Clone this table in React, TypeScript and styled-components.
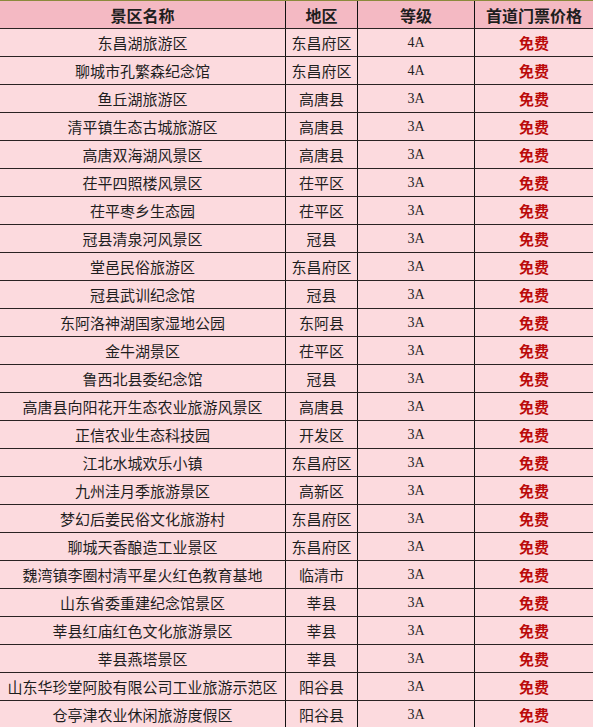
import styled, { createGlobalStyle } from "styled-components";

const GlobalStyle = createGlobalStyle`
  html, body {
    margin: 0;
    padding: 0;
    background: #fcdade;
  }
  body {
    font-family: "Noto Sans CJK SC", "Noto Sans", sans-serif;
    color: #1e1e1e;
  }
`;

interface Spot {
  name: string
  area: string
  level: string
}

const spots: Spot[] = [
  { name: "东昌湖旅游区", area: "东昌府区", level: "4A" },
  { name: "聊城市孔繁森纪念馆", area: "东昌府区", level: "4A" },
  { name: "鱼丘湖旅游区", area: "高唐县", level: "3A" },
  { name: "清平镇生态古城旅游区", area: "高唐县", level: "3A" },
  { name: "高唐双海湖风景区", area: "高唐县", level: "3A" },
  { name: "茌平四照楼风景区", area: "茌平区", level: "3A" },
  { name: "茌平枣乡生态园", area: "茌平区", level: "3A" },
  { name: "冠县清泉河风景区", area: "冠县", level: "3A" },
  { name: "堂邑民俗旅游区", area: "东昌府区", level: "3A" },
  { name: "冠县武训纪念馆", area: "冠县", level: "3A" },
  { name: "东阿洛神湖国家湿地公园", area: "东阿县", level: "3A" },
  { name: "金牛湖景区", area: "茌平区", level: "3A" },
  { name: "鲁西北县委纪念馆", area: "冠县", level: "3A" },
  { name: "高唐县向阳花开生态农业旅游风景区", area: "高唐县", level: "3A" },
  { name: "正信农业生态科技园", area: "开发区", level: "3A" },
  { name: "江北水城欢乐小镇", area: "东昌府区", level: "3A" },
  { name: "九州洼月季旅游景区", area: "高新区", level: "3A" },
  { name: "梦幻后姜民俗文化旅游村", area: "东昌府区", level: "3A" },
  { name: "聊城天香酿造工业景区", area: "东昌府区", level: "3A" },
  { name: "魏湾镇李圈村清平星火红色教育基地", area: "临清市", level: "3A" },
  { name: "山东省委重建纪念馆景区", area: "莘县", level: "3A" },
  { name: "莘县红庙红色文化旅游景区", area: "莘县", level: "3A" },
  { name: "莘县燕塔景区", area: "莘县", level: "3A" },
  { name: "山东华珍堂阿胶有限公司工业旅游示范区", area: "阳谷县", level: "3A" },
  { name: "仓亭津农业休闲旅游度假区", area: "阳谷县", level: "3A" },
];

const Table = styled.div`
  width: 593px;
  display: flex;
  flex-direction: column;
`;

const Row = styled.div<{ $head?: boolean }>`
  display: grid;
  grid-template-columns: 286px 72px 117px 1fr;
  height: 28px;
  box-sizing: border-box;
  border-bottom: 1px solid #2a2222;
  background: ${p => (p.$head ? "#f4b9c3" : "#fcdade")};
  ${p => p.$head && `
    height: 29px;
    border-top: 1px solid #8c8a3c;
    font-weight: 700;
  `}
`;

const Cell = styled.div<{ $last?: boolean; $head?: boolean }>`
  display: flex;
  align-items: center;
  justify-content: center;
  box-sizing: border-box;
  border-right: ${p => (p.$last ? "none" : "1px solid #111")};
  font-size: ${p => (p.$head ? "16px" : "15px")};
  white-space: nowrap;
  overflow: hidden;
  line-height: 1;
`;

const Level = styled(Cell)`
  font-family: "Liberation Serif", "DejaVu Serif", serif;
  font-size: 14px;
`;

const Free = styled(Cell)`
  color: #bb0a0a;
  font-weight: 700;
  font-size: 15px;
`;

export default function App() {
  return (
    <>
      <GlobalStyle />
      <Table>
        <Row $head>
          <Cell $head>景区名称</Cell>
          <Cell $head>地区</Cell>
          <Cell $head>等级</Cell>
          <Cell $head $last>首道门票价格</Cell>
        </Row>
        {spots.map((s, i) => (
          <Row key={i}>
            <Cell>{s.name}</Cell>
            <Cell>{s.area}</Cell>
            <Level>{s.level}</Level>
            <Free $last>免费</Free>
          </Row>
        ))}
      </Table>
    </>
  );
}
